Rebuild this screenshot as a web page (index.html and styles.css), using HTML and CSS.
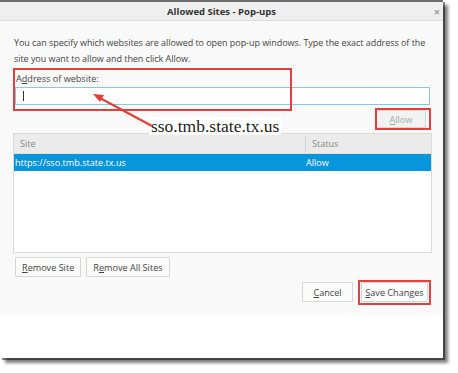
FILE: index.html
```html
<!DOCTYPE html>
<html>
<head>
<meta charset="utf-8">
<link rel="stylesheet" href="styles.css">
</head>
<body>
<div class="window">
  <div class="titlebar">
    <span class="title">Allowed Sites - Pop-ups</span>
    <span class="close">×</span>
  </div>
  <div class="content">
    <p class="intro">You can specify which websites are allowed to open pop-up windows. Type the exact address of the site you want to allow and then click Allow.</p>
    <label class="label">A<u>d</u>dress of website:</label>
    <div class="input"><span class="caret"></span></div>
    <div class="allow-row"><button class="btn allow"><u>A</u>llow</button></div>
    <div class="list">
      <div class="list-head"><span class="col-site">Site</span><span class="col-status">Status</span></div>
      <div class="list-row selected"><span class="col-site">https://sso.tmb.state.tx.us</span><span class="col-status">Allow</span></div>
    </div>
    <div class="remove-row">
      <button class="btn"><u>R</u>emove Site</button>
      <button class="btn">R<u>e</u>move All Sites</button>
    </div>
    <div class="footer-row">
      <button class="btn cancel"><u>C</u>ancel</button>
      <button class="btn save"><u>S</u>ave Changes</button>
    </div>
  </div>
  <div class="bottom"></div>

  <div class="mark mark-address"></div>
  <div class="mark mark-allow"></div>
  <div class="mark mark-save"></div>
  <div class="callout">sso.tmb.state.tx.us</div>
  <svg class="arrow" width="70" height="40" viewBox="0 0 70 40">
    <line x1="62" y1="36" x2="8" y2="7" stroke="#e2413a" stroke-width="2.2"/>
    <polygon points="3,4 14,5 10,12" fill="#e2413a"/>
  </svg>
</div>
</body>
</html>
```

FILE: styles.css
```css
* { box-sizing: border-box; }
html, body { height: 100%; }
body {
  margin: 0;
  background: #fff;
  font-family: "Open Sans", "Noto Sans", sans-serif;
  color: #444;
}
.window {
  position: relative;
  width: 443px;
  height: 358px;
  background: #fff;
  border-top: 2px solid #6e6e6e;
  box-shadow: 2px 2px 0 rgba(0,0,0,0.45), 5px 5px 3px rgba(0,0,0,0.5);
  display: flex;
  flex-direction: column;
}
.titlebar {
  height: 19px;
  background: #efefef;
  border-bottom: 1px solid #dcdcdc;
  display: flex;
  align-items: center;
  justify-content: center;
  position: relative;
}
.title {
  font-size: 9.5px;
  font-weight: bold;
  color: #333;
}
.close {
  position: absolute;
  right: 3px;
  top: 2px;
  font-size: 11px;
  color: #999;
  font-weight: bold;
}
.content {
  background: #f9f9f9;
  height: 294px;
  padding: 14px 12px 0 13px;
  display: flex;
  flex-direction: column;
}
.intro {
  margin: 0 0 0 1px;
  font-size: 9px;
  letter-spacing: -0.05px;
  line-height: 16px;
  color: #444;
}
.label {
  font-size: 9.1px;
  margin: 5px 0 0 3px;
  line-height: 14px;
}
.input {
  margin: 1px 0 0 2px;
  height: 18px;
  width: 415px;
  background: #fff;
  border: 1px solid #86c7ec;
  position: relative;
}
.caret {
  position: absolute;
  left: 7px;
  top: 3px;
  width: 1px;
  height: 10px;
  background: #333;
}
.allow-row {
  display: flex;
  justify-content: flex-end;
  padding-right: 5px;
  margin-top: 5px;
}
.btn {
  font-family: inherit;
  font-size: 9.1px;
  color: #444;
  background: #fbfbfb;
  border: 1px solid #d6d6d6;
  border-radius: 1px;
  height: 20px;
  padding: 0 6px;
  white-space: nowrap;
}
.allow {
  width: 50px;
  height: 18px;
  color: #aaa;
  background: #f2f2f2;
}
.list {
  margin-top: 5px;
  width: 419px;
  height: 120px;
  background: #fff;
  border: 1px solid #dadada;
  font-size: 9.1px;
}
.list-head {
  display: flex;
  height: 20px;
  align-items: center;
  background: #ebebeb;
  color: #888;
  border-bottom: 1px solid #e0e0e0;
}
.list-head .col-site {
  width: 292px;
  padding-left: 6px;
  border-right: 1px solid #cfcfcf;
  line-height: 14px;
}
.list-head .col-status { padding-left: 6px; }
.list-row {
  display: flex;
  height: 17px;
  align-items: center;
}
.list-row.selected {
  background: #0795dc;
  color: #fff;
}
.list-row .col-site { width: 292px; padding-left: 1px; }
.list-row .col-status { padding-left: 0; }
.remove-row {
  display: flex;
  gap: 5px;
  margin: 4px 0 0 2px;
}
.remove-row .btn { height: 20px; }
.footer-row {
  display: flex;
  justify-content: flex-end;
  gap: 8px;
  margin-top: 5px;
  padding-right: 3px;
}
.cancel { width: 51px; }
.save { width: 67px; padding: 0 2px; }
.bottom { flex: 1; background: #fff; }

.mark {
  position: absolute;
  border: 2px solid #e2413a;
}
.mark-address { left: 13px; top: 66px; width: 279px; height: 43px; }
.mark-allow { left: 375px; top: 106px; width: 56px; height: 22px; }
.mark-save { left: 358px; top: 278px; width: 73px; height: 25px; }
.callout {
  position: absolute;
  left: 149px;
  top: 115px;
  font-family: "Liberation Serif", serif;
  font-size: 17.5px;
  color: #222;
  background: #fff;
  padding: 0 2px;
  line-height: 18px;
}
.arrow {
  position: absolute;
  left: 90px;
  top: 88px;
}
```
